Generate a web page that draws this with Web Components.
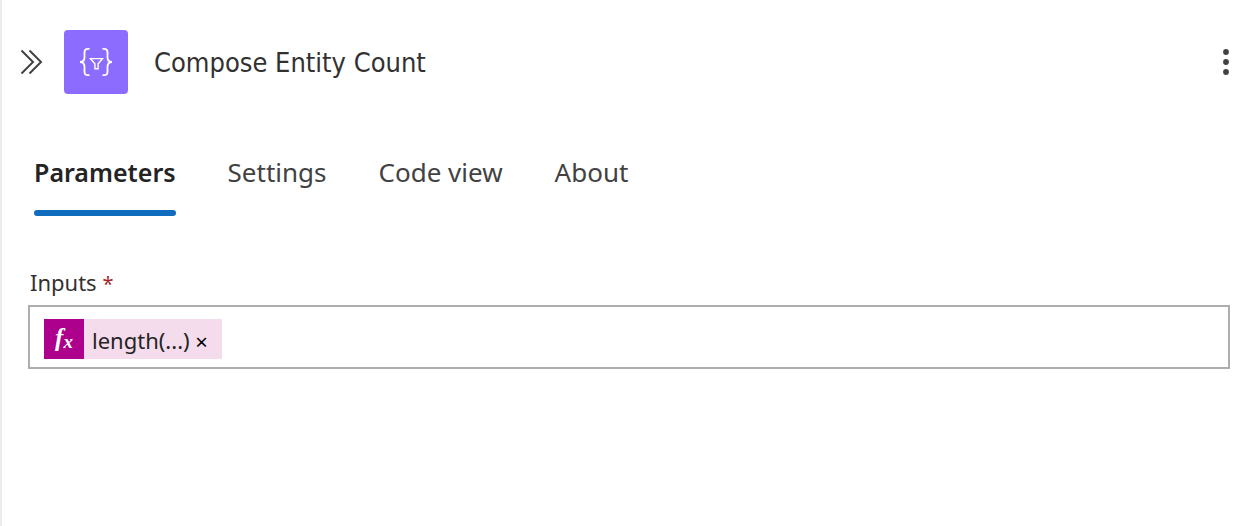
<!DOCTYPE html>
<html lang="en">
<head>
<meta charset="utf-8">
<title>Compose Entity Count</title>
<style>
html, body { margin: 0; min-height: 100%; background: #fff; }
body { display: flex; min-height: 100vh; font-family: "Noto Sans", "Open Sans", sans-serif; color: #242424; }
</style>
</head>
<body>
<action-panel>
  <panel-header slot="header">Compose Entity Count</panel-header>
  <panel-tabs slot="tabs">
    <panel-tab selected>Parameters</panel-tab>
    <panel-tab>Settings</panel-tab>
    <panel-tab>Code view</panel-tab>
    <panel-tab>About</panel-tab>
  </panel-tabs>
  <token-field label="Inputs"><expression-token>length(...)</expression-token></token-field>
</action-panel>
<script>
const define = (name, markup, setup) => customElements.define(name, class extends HTMLElement {
  constructor() {
    super();
    this.attachShadow({ mode: "open" }).innerHTML = markup;
  }
  connectedCallback() { if (setup) setup(this, this.shadowRoot); }
});

define("action-panel", `
<style>
  :host { display: block; flex: 1; min-width: 0; border-left: 2px solid #ebebeb; }
  main { padding: 50px 26px 0; }
</style>
<slot name="header"></slot>
<slot name="tabs"></slot>
<main><slot></slot></main>`);

define("panel-header", `
<style>
  :host { display: block; }
  header { display: flex; align-items: center; padding: 30px 17px 0 16px; }
  button { display: grid; place-items: center; border: 0; padding: 0; background: none; width: 26px; height: 32px; cursor: pointer; }
  .logo { width: 64px; height: 64px; margin: 0 26px 0 20px; border-radius: 4px; background: #8c6cff; }
  svg { display: block; }
  h1 { flex: 1; margin: 0; padding-top: 2px; font: 400 27px/40px "DejaVu Sans Condensed", "Noto Sans", sans-serif; color: #323130; }
</style>
<header>
  <button aria-label="Collapse">
    <svg width="26" height="32" viewBox="0 0 26 32" fill="none" stroke="#424242" stroke-width="2"><path d="M3.500 4.500 15 16 3.500 27.500M11.500 4.500 23 16 11.500 27.500"/></svg>
  </button>
  <svg class="logo" viewBox="0 0 64 64" fill="none" stroke="#fff" stroke-width="1.800" aria-hidden="true">
    <path d="M25.500 18.800h-1.500q-3.500 0-3.500 3.500v5q0 4.700-4.500 4.700 4.500 0 4.500 4.700v5q0 3.500 3.500 3.500h1.500M38.500 18.800h1.500q3.500 0 3.500 3.500v5q0 4.700 4.500 4.700-4.500 0-4.500 4.700v5q0 3.500-3.500 3.500h-1.500"/>
    <path stroke-width="1.400" d="M26.500 28.600h12l-4.400 5.200v4.900h-3.200v-4.900z"/>
  </svg>
  <h1><slot></slot></h1>
  <button aria-label="More commands">
    <svg width="26" height="32" viewBox="0 0 26 32" fill="#424242"><circle cx="13" cy="6" r="2.900"/><circle cx="13" cy="16" r="2.900"/><circle cx="13" cy="26" r="2.900"/></svg>
  </button>
</header>`);

define("panel-tabs", `
<style>
  :host { display: block; }
  nav { display: flex; gap: 52px; padding: 56px 32px 0; }
</style>
<nav role="tablist"><slot></slot></nav>`);

define("panel-tab", `
<style>
  :host { display: block; }
  button { display: block; border: 0; padding: 3px 0 19px; background: none; font: 400 26px/38px "Noto Sans", "Open Sans", sans-serif; color: #424242; white-space: nowrap; cursor: pointer; border-radius: 0; }
  .bar { height: 6px; border-radius: 3px; }
  :host([selected]) button { font-size: 25px; font-weight: 600; color: #242424; }
  :host([selected]) .bar { background: #0f6cbd; }
</style>
<button role="tab"><slot></slot></button>
<div class="bar"></div>`, (host, root) => {
  root.querySelector("button").setAttribute("aria-selected", host.hasAttribute("selected"));
});

define("token-field", `
<style>
  :host { display: block; }
  label { display: block; padding-left: 2px; font-size: 22px; line-height: 32px; color: #323130; }
  .required { font-size: 20px; color: #a4262c; }
  .box { display: flex; align-items: center; box-sizing: border-box; min-height: 64px; margin-top: 5px; padding: 10px 14px 6px; border: 2px solid #adadad; }
  input { flex: 1; min-width: 0; border: 0; padding: 0; outline: 0; background: none; font: 22px/32px "Noto Sans", sans-serif; color: inherit; }
</style>
<label for="value"><span class="name"></span> <span class="required">*</span></label>
<div class="box"><slot></slot><input id="value" type="text" required></div>`, (host, root) => {
  root.querySelector(".name").textContent = host.getAttribute("label");
});

define("expression-token", `
<style>
  :host { display: flex; align-items: center; height: 40px; background: #f5dcec; color: #242424; font-size: 22px; line-height: 40px; }
  .fx { display: flex; justify-content: center; width: 40px; height: 40px; background: #ad008c; color: #fff; font: italic 700 25px/38px "Liberation Serif", serif; }
  .fx small { font-size: 19px; line-height: 46px; }
  .text { padding: 2px 0 0 8px; }
  button { width: 24px; height: 40px; margin-right: 8px; padding: 4px 0 0; border: 0; background: none; color: #000; font: 22px/36px "Noto Sans", sans-serif; cursor: pointer; }
</style>
<span class="fx" aria-hidden="true"><span>f</span><small>x</small></span>
<span class="text"><slot></slot></span>
<button aria-label="Remove expression">×</button>`);
</script>
</body>
</html>
